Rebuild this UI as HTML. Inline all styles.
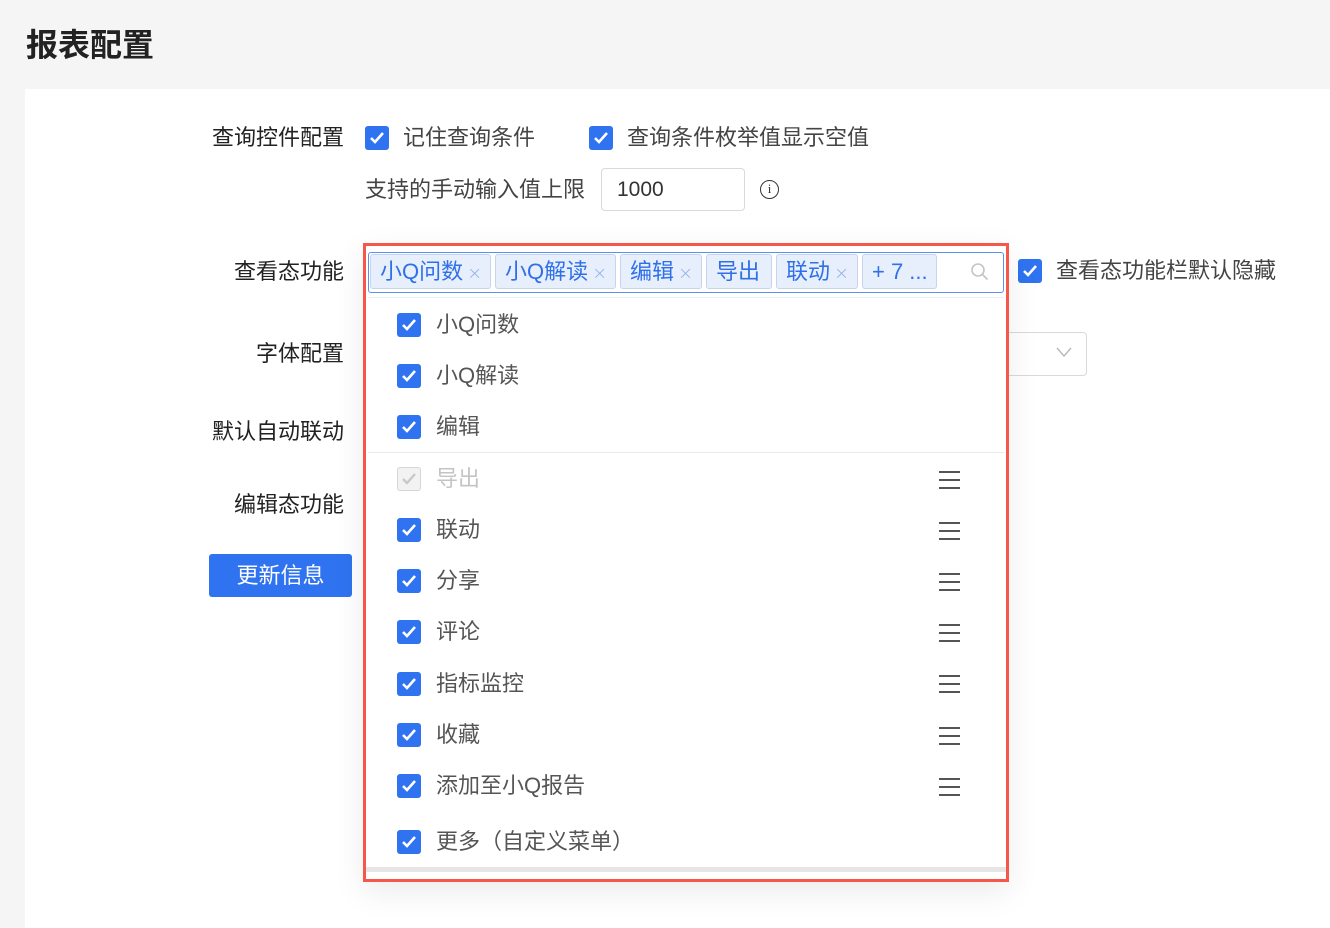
<!DOCTYPE html>
<html><head><meta charset="utf-8"><style>
*{margin:0;padding:0;box-sizing:border-box}
body{width:1330px;height:928px;background:#f5f5f5;font-family:"Liberation Sans","Noto Sans CJK SC",sans-serif;position:relative;overflow:hidden;color:#333}
.a{position:absolute;white-space:nowrap}
.t{font-size:22px;line-height:26px}
.lbl{font-size:22px;line-height:26px;color:#222;text-align:right;width:240px;left:104px}
.cb{position:absolute;width:24px;height:24px;border-radius:3px;background:#2f73f0}
.cb svg{position:absolute;left:4px;top:5px}
.cb.dis{background:#f2f2f2;border:1px solid #d6d6d6}
.tag{position:absolute;top:254px;height:35px;background:#e8effc;border:1px solid #c8d4ea;border-radius:3px;color:#2f6fe8;font-size:22px;line-height:33px;padding-left:9px}
.tag i{font-style:normal;color:#8fb0ee;font-size:18px;margin-left:4px;font-family:"DejaVu Sans",sans-serif;font-weight:300}
.ham{position:absolute;left:939px;width:21px;height:18px;border-top:2px solid #555;border-bottom:2px solid #555}
.ham:after{content:"";position:absolute;left:0;right:0;top:6px;height:2px;background:#555}
</style></head><body>
<div class="a" style="left:26px;top:25px;font-size:32px;font-weight:bold;line-height:40px;color:#222">报表配置</div>
<div class="a" style="left:25px;top:89px;width:1305px;height:839px;background:#fff"></div>

<div class="a lbl" style="top:125px">查询控件配置</div>
<div class="cb" style="left:365px;top:126px"><svg width="16" height="14" viewBox="0 0 16 14"><path d="M2 7l4 4 8-9" stroke="#fff" stroke-width="2.6" fill="none"/></svg></div>
<div class="a t" style="left:403px;top:125px;color:#444">记住查询条件</div>
<div class="cb" style="left:589px;top:126px"><svg width="16" height="14" viewBox="0 0 16 14"><path d="M2 7l4 4 8-9" stroke="#fff" stroke-width="2.6" fill="none"/></svg></div>
<div class="a t" style="left:627px;top:125px;color:#444">查询条件枚举值显示空值</div>
<div class="a t" style="left:365px;top:177px;color:#444">支持的手动输入值上限</div>
<div class="a" style="left:601px;top:168px;width:144px;height:43px;border:1px solid #d9d9d9;border-radius:4px;font-size:21px;line-height:41px;padding-left:15px;color:#333">1000</div>
<div class="a" style="left:760px;top:180px;width:19px;height:19px;border:1.5px solid #333;border-radius:50%;font-size:13px;line-height:16px;text-align:center;font-family:'Liberation Serif',serif">i</div>

<div class="a lbl" style="top:259px">查看态功能</div>
<div class="a lbl" style="top:341px">字体配置</div>
<div class="a lbl" style="top:419px">默认自动联动</div>
<div class="a lbl" style="top:492px">编辑态功能</div>
<div class="a" style="left:209px;top:554px;width:143px;height:43px;background:#2f73f0;border-radius:3px;color:#fff;font-size:22px;line-height:43px;text-align:center">更新信息</div>

<div class="a" style="left:960px;top:332px;width:127px;height:44px;border:1px solid #d9d9d9;border-radius:4px"></div>
<svg class="a" style="left:1055px;top:346px" width="18" height="12" viewBox="0 0 18 12"><path d="M2 2l7 8 7-8" stroke="#bbb" stroke-width="1.5" fill="none"/></svg>
<div class="cb" style="left:1018px;top:259px"><svg width="16" height="14" viewBox="0 0 16 14"><path d="M2 7l4 4 8-9" stroke="#fff" stroke-width="2.6" fill="none"/></svg></div>
<div class="a t" style="left:1056px;top:258px;color:#444">查看态功能栏默认隐藏</div>

<div class="a" style="left:363px;top:243px;width:646px;height:639px;border:3px solid #f5574a;background:#fff;box-shadow:0 10px 30px rgba(0,0,0,.08)"></div>
<div class="a" style="left:368px;top:252px;width:636px;height:41px;border:1px solid #5b8ff0;border-radius:3px;background:#fff"></div>
<div class="tag" style="left:370px;width:121px">小Q问数<i>×</i></div>
<div class="tag" style="left:495px;width:121px">小Q解读<i>×</i></div>
<div class="tag" style="left:620px;width:82px">编辑<i>×</i></div>
<div class="tag" style="left:706px;width:66px">导出</div>
<div class="tag" style="left:776px;width:82px">联动<i>×</i></div>
<div class="tag" style="left:862px;width:75px">+ 7 ...</div>
<svg class="a" style="left:970px;top:262px" width="20" height="20" viewBox="0 0 20 20"><circle cx="8" cy="8" r="6" stroke="#c4c4c4" stroke-width="1.6" fill="none"/><path d="M12.5 12.5l5 5" stroke="#c4c4c4" stroke-width="1.6"/></svg>
<div class="a" style="left:368px;top:297px;width:636px;height:1px;background:#eee"></div>
<div class="a" style="left:368px;top:452px;width:636px;height:1px;background:#eaeaea"></div>
<div class="a" style="left:366px;top:867px;width:640px;height:5px;background:#e6e6e6"></div>

<div class="cb" style="left:397px;top:313px"><svg width="16" height="14" viewBox="0 0 16 14"><path d="M2 7l4 4 8-9" stroke="#fff" stroke-width="2.6" fill="none"/></svg></div><div class="a t" style="left:436px;top:312px;color:#555">小Q问数</div>
<div class="cb" style="left:397px;top:364px"><svg width="16" height="14" viewBox="0 0 16 14"><path d="M2 7l4 4 8-9" stroke="#fff" stroke-width="2.6" fill="none"/></svg></div><div class="a t" style="left:436px;top:363px;color:#555">小Q解读</div>
<div class="cb" style="left:397px;top:415px"><svg width="16" height="14" viewBox="0 0 16 14"><path d="M2 7l4 4 8-9" stroke="#fff" stroke-width="2.6" fill="none"/></svg></div><div class="a t" style="left:436px;top:414px;color:#555">编辑</div>
<div class="cb dis" style="left:397px;top:467px"><svg width="16" height="14" viewBox="0 0 16 14" style="left:3px;top:4px"><path d="M2 7l4 4 8-9" stroke="#c8c8c8" stroke-width="2.4" fill="none"/></svg></div><div class="a t" style="left:436px;top:466px;color:#c4c4c4">导出</div><div class="ham" style="top:471px"></div>
<div class="cb" style="left:397px;top:518px"><svg width="16" height="14" viewBox="0 0 16 14"><path d="M2 7l4 4 8-9" stroke="#fff" stroke-width="2.6" fill="none"/></svg></div><div class="a t" style="left:436px;top:517px;color:#555">联动</div><div class="ham" style="top:522px"></div>
<div class="cb" style="left:397px;top:569px"><svg width="16" height="14" viewBox="0 0 16 14"><path d="M2 7l4 4 8-9" stroke="#fff" stroke-width="2.6" fill="none"/></svg></div><div class="a t" style="left:436px;top:568px;color:#555">分享</div><div class="ham" style="top:573px"></div>
<div class="cb" style="left:397px;top:620px"><svg width="16" height="14" viewBox="0 0 16 14"><path d="M2 7l4 4 8-9" stroke="#fff" stroke-width="2.6" fill="none"/></svg></div><div class="a t" style="left:436px;top:619px;color:#555">评论</div><div class="ham" style="top:624px"></div>
<div class="cb" style="left:397px;top:672px"><svg width="16" height="14" viewBox="0 0 16 14"><path d="M2 7l4 4 8-9" stroke="#fff" stroke-width="2.6" fill="none"/></svg></div><div class="a t" style="left:436px;top:671px;color:#555">指标监控</div><div class="ham" style="top:675px"></div>
<div class="cb" style="left:397px;top:723px"><svg width="16" height="14" viewBox="0 0 16 14"><path d="M2 7l4 4 8-9" stroke="#fff" stroke-width="2.6" fill="none"/></svg></div><div class="a t" style="left:436px;top:722px;color:#555">收藏</div><div class="ham" style="top:727px"></div>
<div class="cb" style="left:397px;top:774px"><svg width="16" height="14" viewBox="0 0 16 14"><path d="M2 7l4 4 8-9" stroke="#fff" stroke-width="2.6" fill="none"/></svg></div><div class="a t" style="left:436px;top:773px;color:#555">添加至小Q报告</div><div class="ham" style="top:778px"></div>
<div class="cb" style="left:397px;top:830px"><svg width="16" height="14" viewBox="0 0 16 14"><path d="M2 7l4 4 8-9" stroke="#fff" stroke-width="2.6" fill="none"/></svg></div><div class="a t" style="left:436px;top:829px;color:#555">更多（自定义菜单）</div>
</body></html>
